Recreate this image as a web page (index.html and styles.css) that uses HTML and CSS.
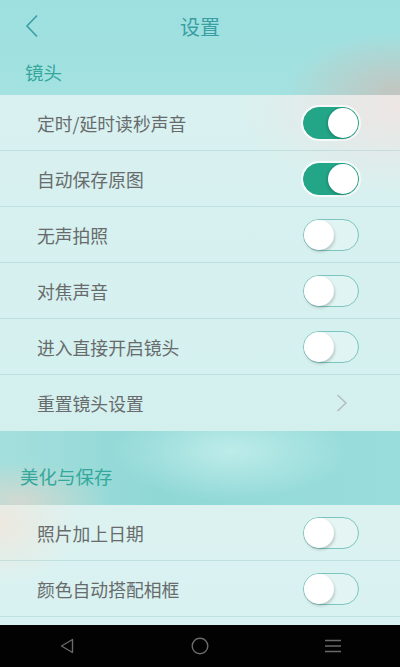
FILE: index.html
```html
<!DOCTYPE html>
<html lang="zh">
<head>
    <meta charset="UTF-8">
    <meta name="viewport" content="width=device-width, initial-scale=1.0">
    <title>设置</title>
    <link rel="stylesheet" href="styles.css">
</head>
<body>

    <div class="screen">
        <div class="content">
            <header class="topbar">
                <span class="back">
                    <svg width="14" height="24" viewBox="0 0 14 24"><path d="M12 1.5 L2 12 L12 22.5" fill="none" stroke="#3b9ea3" stroke-width="1.6"/></svg>
                </span>
                <h1>设置</h1>
            </header>

            <div class="group-title first">镜头</div>
            <section class="group">
                <div class="row"><span>定时/延时读秒声音</span><span class="switch on"></span></div>
                <div class="row"><span>自动保存原图</span><span class="switch on"></span></div>
                <div class="row"><span>无声拍照</span><span class="switch"></span></div>
                <div class="row"><span>对焦声音</span><span class="switch"></span></div>
                <div class="row"><span>进入直接开启镜头</span><span class="switch"></span></div>
                <div class="row last">
                    <span>重置镜头设置</span>
                    <svg class="arrow" width="12" height="18" viewBox="0 0 12 18"><path d="M1.5 1 L10 9 L1.5 17" fill="none" stroke="#b3bcbd" stroke-width="1.4"/></svg>
                </div>
            </section>

            <div class="group-title second">美化与保存</div>
            <section class="group lower">
                <div class="row"><span>照片加上日期</span><span class="switch"></span></div>
                <div class="row"><span>颜色自动搭配相框</span><span class="switch"></span></div>
                <div class="row"><span>&nbsp;</span></div>
            </section>
        </div>

        <nav class="navbar">
            <span class="nav-btn">
                <svg width="14" height="16" viewBox="0 0 14 16"><path d="M12.5 1.5 L1.5 8 L12.5 14.5 Z" fill="none" stroke="#6a6a6a" stroke-width="1.4" stroke-linejoin="round"/></svg>
            </span>
            <span class="nav-btn">
                <svg width="18" height="18" viewBox="0 0 18 18"><circle cx="9" cy="9" r="7.8" fill="none" stroke="#6a6a6a" stroke-width="1.4"/></svg>
            </span>
            <span class="nav-btn">
                <svg width="18" height="14" viewBox="0 0 18 14"><path d="M1 1.5 H17 M1 7 H17 M1 12.5 H17" stroke="#6a6a6a" stroke-width="1.4"/></svg>
            </span>
        </nav>
    </div>

</body>
</html>
```

FILE: styles.css
```css
* {
    box-sizing: border-box;
}
html, body {
    margin: 0;
    padding: 0;
}
body {
    font-family: "Noto Sans CJK SC", "Noto Sans", sans-serif;
    color: #666;
}
.screen {
    width: 400px;
    height: 667px;
    display: flex;
    flex-direction: column;
    overflow: hidden;
    background:
        radial-gradient(ellipse 110px 60px at 395px 92px, rgba(200, 192, 186, 0.85), rgba(200, 192, 186, 0) 100%),
        linear-gradient(180deg, #9de0df 0%, #a3e2e1 95px, #9de0df 95px);
}
.content {
    flex: 1;
    overflow: hidden;
}

/* top bar */
.topbar {
    height: 52px;
    display: flex;
    align-items: center;
    justify-content: center;
    position: relative;
}
.topbar h1 {
    margin: 0;
    font-size: 20px;
    font-weight: normal;
    color: #3a9ea3;
}
.back {
    position: absolute;
    left: 25px;
    top: 14px;
}

/* section titles */
.group-title {
    font-size: 18.5px;
    color: #35a89b;
    display: flex;
    align-items: center;
}
.group-title.first {
    height: 43px;
    padding-left: 25px;
    padding-bottom: 4px;
}
.group-title.second {
    height: 74px;
    padding-left: 20px;
    padding-top: 16px;
    background:
        radial-gradient(ellipse 90px 40px at 20px 70px, rgba(220, 215, 205, 0.8), rgba(220, 215, 205, 0)),
        radial-gradient(ellipse 120px 50px at 230px 20px, rgba(200, 240, 238, 0.8), rgba(200, 240, 238, 0)),
        linear-gradient(90deg, #a4dfdd 0%, #8fd8d6 40%, #9adedc 100%);
}

/* rows */
.group {
    background:
        radial-gradient(ellipse 160px 90px at 400px 10px, rgba(238, 228, 226, 0.95), rgba(238, 228, 226, 0)),
        linear-gradient(180deg, #d9f1f0 0%, #d3f0ef 100%);
}
.group.lower {
    background:
        radial-gradient(ellipse 80px 60px at 0 20px, rgba(238, 232, 222, 0.95), rgba(238, 232, 222, 0)),
        linear-gradient(180deg, #dcf2f1 0%, #d6f2f1 100%);
}
.row {
    height: 56px;
    padding: 0 41px 0 37px;
    display: flex;
    align-items: center;
    justify-content: space-between;
    font-size: 17.8px;
    color: #676b6b;
    border-bottom: 1px solid rgba(160, 205, 205, 0.45);
}
.row.last {
    border-bottom: none;
}
.arrow {
    margin-right: 11px;
}

/* toggle switch */
.switch {
    width: 56px;
    height: 32px;
    border-radius: 16px;
    border: 1px solid #7ec6bd;
    background: rgba(255, 255, 255, 0.25);
    position: relative;
    flex-shrink: 0;
}
.switch::after {
    content: "";
    position: absolute;
    top: 0;
    left: 0;
    width: 30px;
    height: 30px;
    border-radius: 50%;
    background: #fff;
    box-shadow: 1px 2px 3px rgba(0, 0, 0, 0.18);
}
.switch.on {
    background: #23a587;
    border-color: #23a587;
    box-shadow: 0 0 0 2px rgba(255, 255, 255, 0.7);
}
.switch.on::after {
    left: auto;
    right: 0;
    box-shadow: -1px 1px 3px rgba(0, 0, 0, 0.2);
}

/* bottom nav */
.navbar {
    height: 42px;
    background: #020202;
    display: grid;
    grid-template-columns: repeat(3, 1fr);
    align-items: center;
}
.nav-btn {
    display: flex;
    justify-content: center;
}
```
